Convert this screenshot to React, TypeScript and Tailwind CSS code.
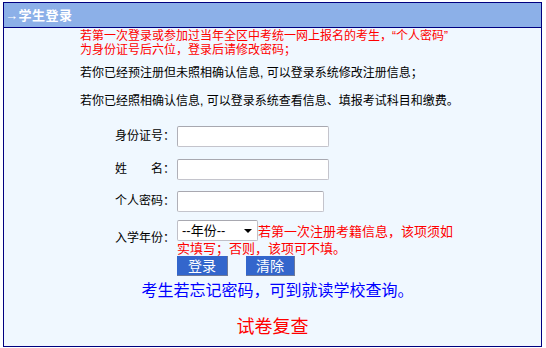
const FONT = { fontFamily: '"Liberation Sans", "Noto Sans CJK SC", sans-serif' };

function Field({ label, width }: { label: string; width: string }) {
  return (
    <div className="flex items-center">
      <span className="w-[62px] text-[12px] leading-[13px] text-black">{label}</span>
      <input
        type="text"
        className={`${width} h-[21px] bg-white border border-[#c4c4cc] border-t-[#a8a8b0] border-l-[#b0b0b8] rounded-[2px] outline-none`}
      />
    </div>
  );
}

export default function App() {
  return (
    <div className="w-[546px] h-[348px] bg-white pl-[3px] pt-[2px]" style={FONT}>
      <div className="w-[539px] h-[345px] border border-[#000080] bg-[#F0F8FF] flex flex-col">
        {/* header */}
        <div className="h-[25px] bg-[#8CB0E8] border-b border-[#000080] flex items-center pl-[1px]">
          <span className="text-white text-[13px] font-bold leading-none tracking-[0.5px]">→学生登录</span>
        </div>

        {/* notice */}
        <div className="pl-[76px] pt-[1px] text-[12px] leading-[14px] text-[#FF0000]">
          <div>若第一次登录或参加过当年全区中考统一网上报名的考生，“个人密码”</div>
          <div>为身份证号后六位，登录后请修改密码；</div>
        </div>
        <div className="pl-[76px] mt-[10px] text-[12px] leading-[13px] text-black">
          若你已经预注册但未照相确认信息, 可以登录系统修改注册信息；
        </div>
        <div className="pl-[76px] mt-[15px] text-[12px] leading-[13px] text-black">
          若你已经照相确认信息, 可以登录系统查看信息、填报考试科目和缴费。
        </div>

        {/* form */}
        <div className="pl-[111px] mt-[18px] flex flex-col">
          <Field label="身份证号：" width="w-[152px]" />
          <div className="mt-[12px]">
            <Field label="姓　　名：" width="w-[152px]" />
          </div>
          <div className="mt-[11px]">
            <Field label="个人密码：" width="w-[147px]" />
          </div>

          <div className="mt-[8px] flex items-center">
            <span className="w-[62px] text-[12px] leading-[13px] text-black">入学年份：</span>
            <div className="flex flex-col text-[13px] leading-[14px] text-[#FF0000]">
              <div className="flex items-end">
                <div className="relative w-[81px] h-[21px] bg-white border border-[#c0c0c8] border-t-[#a8a8b0] rounded-[2px] flex items-center pl-[4px] text-[13px] leading-[15px] text-black">
                  --年份--
                  <span className="absolute right-[5px] top-[8px] w-0 h-0 border-l-[4px] border-r-[4px] border-t-[4px] border-l-transparent border-r-transparent border-t-black" />
                </div>
                <span className="mb-[2px]">若第一次注册考籍信息，该项须如</span>
              </div>
              <div className="mt-px">实填写；否则，该项可不填。</div>
            </div>
          </div>

          <div className="mt-0 ml-[62px] flex gap-[18px]">
            <button className="w-[51px] h-[20px] bg-[#3366CC] border-r border-b border-[#6e7a99] text-white text-[14px] leading-none">
              登录
            </button>
            <button className="w-[49px] h-[20px] bg-[#3366CC] border-r border-b border-[#6e7a99] text-white text-[14px] leading-none">
              清除
            </button>
          </div>
        </div>

        <div className="mt-[6px] text-center text-[16px] leading-[18px] text-[#0000FF] pl-[10px]">
          考生若忘记密码，可到就读学校查询。
        </div>
        <div className="mt-[17px] text-center text-[18px] leading-[20px] text-[#FF0000]">
          试卷复查
        </div>
      </div>
    </div>
  );
}
